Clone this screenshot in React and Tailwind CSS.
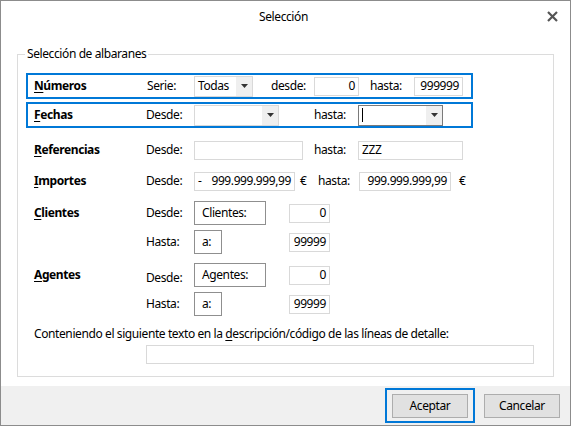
const font = { fontFamily: '"Noto Sans", "Open Sans", sans-serif' };

function Caret() {
  return (
    <svg width="7" height="4" viewBox="0 0 7 4">
      <path d="M0 0h7L3.5 4z" fill="#333" />
    </svg>
  );
}

function Select({ width, value, focused }) {
  return (
    <div
      className={`flex h-[21px] items-stretch border bg-white ${focused ? "border-[#7a7a7a]" : "border-[#d9d9d9]"}`}
      style={{ width }}
    >
      <div className="flex flex-1 items-center pl-[3px]">
        {focused ? <span className="h-[14px] w-px bg-black" /> : value}
      </div>
      <div className="flex w-[16px] items-center justify-center bg-[#efefef]">
        <Caret />
      </div>
    </div>
  );
}

function Field({ width, value, align = "right", children }) {
  return (
    <div
      className={`flex h-[19px] items-center border border-[#d9d9d9] bg-white px-[3px] ${align === "right" ? "justify-end" : "justify-start"}`}
      style={{ width }}
    >
      {children}
      {value}
    </div>
  );
}

function Btn({ width, label }) {
  return (
    <div
      className="flex h-[24px] items-center border border-[#8f8f8f] bg-white pl-[7px]"
      style={{ width }}
    >
      {label}
    </div>
  );
}

function Row({ mt, h, highlight, label, children }) {
  return (
    <div
      className={`ml-[8px] mr-[80px] flex items-center border-2 pl-[6px] ${highlight ? "border-[#0078d7]" : "border-transparent"}`}
      style={{ marginTop: mt, height: h }}
    >
      <div className="w-[112px] font-bold">{label}</div>
      {children}
    </div>
  );
}

function Mn({ c, rest }) {
  return (
    <span>
      <span className="underline underline-offset-2">{c}</span>
      {rest}
    </span>
  );
}

export default function App() {
  return (
    <div
      className="flex h-[426px] w-[571px] flex-col border border-[#8c8c8c] bg-white text-[12px] leading-[16px] tracking-[-0.4px] text-black"
      style={font}
    >
      <div className="flex h-[31px] items-center">
        <div className="flex-1 text-center pl-[30px]">Selección</div>
        <div className="flex w-[34px] items-center justify-center pr-[2px]">
          <svg width="11" height="11" viewBox="0 0 11 11">
            <path d="M1 1L10 10M10 1L1 10" stroke="#555" strokeWidth="2.2" />
          </svg>
        </div>
      </div>

      <div className="flex-1 px-[16px] pt-[14px]">
        <fieldset className="border border-[#dcdcdc] pb-[12px]">
          <legend className="ml-[7px] px-[2px]">Selección de albaranes</legend>

          <Row mt={11} h={26} highlight label={<Mn c="N" rest="úmeros" />}>
            <div className="w-[48px] pl-[1px]">Serie:</div>
            <Select width={59} value="Todas" />
            <div className="w-[61px] pl-[18px]">desde:</div>
            <Field width={45} value="0" />
            <div className="w-[55px] pl-[11px]">hasta:</div>
            <Field width={49} value="999999" />
          </Row>

          <Row mt={3} h={26} highlight label={<Mn c="F" rest="echas" />}>
            <div className="w-[48px]">Desde:</div>
            <Select width={85} />
            <div className="w-[79px] pl-[35px]">hasta:</div>
            <Select width={85} focused />
          </Row>

          <Row mt={11} h={22} label={<Mn c="R" rest="eferencias" />}>
            <div className="w-[48px]">Desde:</div>
            <Field width={109} />
            <div className="w-[55px] pl-[11px]">hasta:</div>
            <Field width={105} value="ZZZ" align="left" />
          </Row>

          <Row mt={9} h={22} label={<Mn c="I" rest="mportes" />}>
            <div className="w-[48px]">Desde:</div>
            <Field width={101} value="999.999.999,99">
              <span className="mr-auto">-</span>
            </Field>
            <div className="w-[23px] pl-[5px]">€</div>
            <div className="w-[41px]">hasta:</div>
            <Field width={92} value="999.999.999,99" />
            <div className="pl-[8px]">€</div>
          </Row>

          <Row mt={8} h={26} label={<Mn c="C" rest="lientes" />}>
            <div className="w-[48px]">Desde:</div>
            <Btn width={72} label="Clientes:" />
            <div className="w-[23px]" />
            <Field width={41} value="0" />
          </Row>
          <Row mt={3} h={26} label="">
            <div className="w-[48px]">Hasta:</div>
            <Btn width={28} label="a:" />
            <div className="w-[67px]" />
            <Field width={41} value="99999" />
          </Row>

          <Row mt={7} h={26} label={<Mn c="A" rest="gentes" />}>
            <div className="w-[48px] pt-[6px]">Desde:</div>
            <Btn width={72} label="Agentes:" />
            <div className="w-[23px]" />
            <Field width={41} value="0" />
          </Row>
          <Row mt={3} h={26} label="">
            <div className="w-[48px]">Hasta:</div>
            <Btn width={28} label="a:" />
            <div className="w-[67px]" />
            <Field width={41} value="99999" />
          </Row>

          <div className="ml-[16px] mt-[9px]">
            Conteniendo el siguiente texto en la <span className="underline underline-offset-2">d</span>
            escripción/código de las líneas de detalle:
          </div>
          <div className="ml-[128px] mr-[19px] mt-[3px] h-[19px] border border-[#d9d9d9]" />
        </fieldset>
      </div>

      <div className="flex h-[39px] items-center justify-end gap-[9px] bg-[#f0f0f0] pr-[10px]">
        <div className="flex h-[35px] items-center border-2 border-[#0078d7] px-[5px]">
          <div className="flex h-[24px] w-[76px] items-center justify-center border border-[#adadad] bg-[#e1e1e1]">
            Aceptar
          </div>
        </div>
        <div className="flex h-[24px] w-[76px] items-center justify-center border border-[#adadad] bg-[#e1e1e1]">
          Cancelar
        </div>
      </div>
    </div>
  );
}
